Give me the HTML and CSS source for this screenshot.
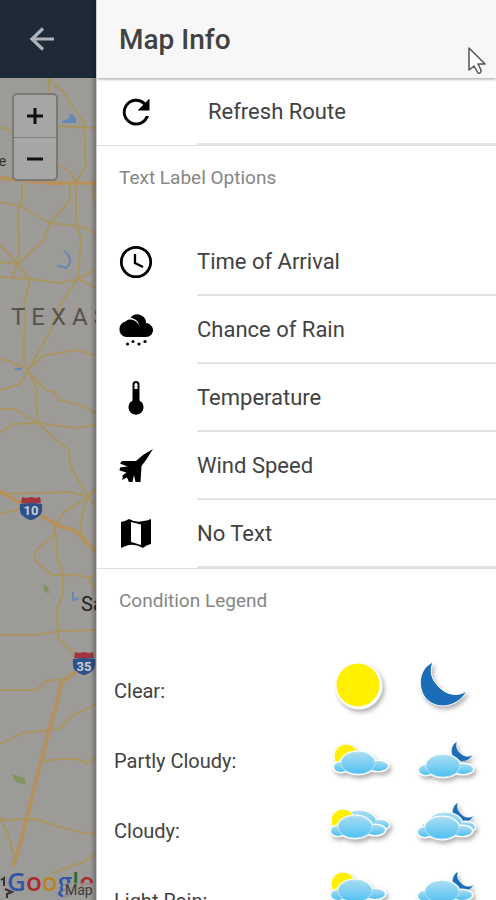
FILE: index.html
```html
<!DOCTYPE html>
<html lang="en">
<head>
<meta charset="utf-8">
<meta name="viewport" content="width=device-width, initial-scale=1">
<title>Map Info</title>
<link rel="stylesheet" href="styles.css">
</head>
<body>
<div class="app">
  <section class="map-side" aria-label="Map">
    <header class="map-bar">
      <button class="back" type="button" aria-label="Back">
        <svg width="26" height="24" viewBox="0 0 26 24"><path d="M25 12H3M14 1.500L3 12l11 10.500" fill="none" stroke="#b0b4b8" stroke-width="3.200"/></svg>
      </button>
    </header>
    <div class="map">
      <svg class="tiles" viewBox="0 78 96 822" preserveAspectRatio="xMinYMin slice">
        <g class="road">
          <path d="M49 78l3 5 12 9 8 14 12 16 1 28 1 16-10 16"/>
          <path d="M49 78l-1 16M0 127l13 5M57 126l39 2M57 164l13 8 6 10"/>
          <path d="M22 184v17l-4 11 1 38-1 14M0 202l20 4 30 17 34 4 12 7M70 184v16l-20 23-7 18-25 23-6 13"/>
          <path d="M76 184v38l5 18-3 38-18 27-10 27-22 38M93 182v14l3 7"/>
          <path d="M0 245l18 19 12 16-5 20-1 65M0 262l18 2M0 277l30 2 30 4 18-4 18-10M78 279l18 8"/>
          <path d="M0 358l28 11 17-14 33-5 18 6M28 371l-8 13-20 6M28 371l9 18-1 16 3 18M28 371l17 18 9 3 5 8 21 5 16 8"/>
          <path d="M0 409h14l24 14 37 5 21-3M0 433l12-9 26-1 18 17 13 10 1 15 8 15 10 16 8 10"/>
          <path d="M0 494l70-2 18 5 8-8M88 497l-5 15-3 15 4 12M88 497l-23 14-10 15-1 9-18 15-1 10 15 14 12 2 13-2 13 4 8 12M0 514l20-5"/>
          <path d="M54 528l3 12v18l6 14v23l-6 13 1 30 17 17M0 635h35l25-4 36-1M88 578l8-3"/>
          <path d="M0 690h36l10-9 16-2M0 743h4l18-10 28-3 10-2 15-15 9-2 12-7M43 761l17-2h15l12 4 9-5M0 820l35-1 25 8 24 6 12 1M0 817l8 17 7 24M52 873l31-11 13-8"/>
        </g>
        <path class="highway" d="M0 178l50 5h46M0 491l45 27 15 8 15 5 21 21M82 667l-20 15-6 23-8 30-8 30-10 40-10 40-7 21"/>
        <g class="water">
          <path d="M62 121l6-2 2-5 4 1 2 4v4H62z"/>
          <path d="M64 251q5 3 6 9 0 7-5 8-2-2-8-2M15 369h7M73 592v8l6-2" fill="none" stroke="#6688b5" stroke-width="2"/>
        </g>
        <path class="park" d="M11 774l13 4 2 6-9-1zM43 584l5 3 1 7-5-3z"/>
        <text class="state" x="11" y="325">TEXAS</text>
        <text class="city" x="81" y="611">San</text>
        <text class="town" x="-9" y="166">ne</text>
        <g id="shield">
          <path d="M20 504q4-1 11-1t11 1q1 10-3 12-5 4-8 4t-8-4q-4-2-3-12z" fill="#2d5289"/>
          <path d="M21 503l1-6 4 1 5-1 5 1 4-1 1 6z" fill="#a1343c"/>
        </g>
        <use href="#shield" x="53" y="155"/>
        <text class="route" x="31" y="515">10</text>
        <text class="route" x="84" y="671">35</text>
        <text class="google" x="7" y="891"><tspan fill="#3158a6">G</tspan><tspan fill="#a92d2e">o</tspan><tspan fill="#bb861d">o</tspan><tspan fill="#3158a6">g</tspan><tspan fill="#27723b">l</tspan><tspan fill="#a92d2e">e</tspan></text>
        <path d="M1 880l3-2v8M5 889l7 3-5 2v4" fill="none" stroke="#333" stroke-width="2"/>
        <path class="terms-plate" d="M63 883h33v17H63z"/>
        <text class="terms" x="65" y="895">Map</text>
      </svg>
      <div class="zoomer">
        <button type="button" aria-label="Zoom in"><svg width="18" height="18" viewBox="0 0 18 18"><path d="M9 1v16M1 9h16"/></svg></button>
        <button type="button" aria-label="Zoom out"><svg width="18" height="18" viewBox="0 0 18 18"><path d="M1 9h16"/></svg></button>
      </div>
    </div>
  </section>

  <aside class="panel">
    <header class="panel-bar">
      <h1>Map Info</h1>
      <svg class="pointer" width="20" height="29" viewBox="0 0 20 29"><path d="M2 2v22l5-4 4 7q3 1 3-3l-3-6h7z" fill="#fff" stroke="#55555a" stroke-width="1.500" stroke-linejoin="round"/></svg>
    </header>

    <ul class="list">
      <li class="row refresh"><button type="button">
        <svg class="icon" viewBox="0 0 36 36"><path d="M27.500 8.500A13.400 13.400 0 1 0 31 22h-3.300A10.400 10.400 0 1 1 25.300 10.700L19.500 16.500H31.500V4.500z"/></svg>
        <span>Refresh Route</span></button></li>
    </ul>

    <h2>Text Label Options</h2>
    <ul class="list options">
      <li class="row"><button type="button">
        <svg class="icon" viewBox="0 0 36 36"><circle cx="18" cy="18" r="14.700" fill="none" stroke="#000" stroke-width="2.800"/><path d="M17 10v9l8 4" fill="none" stroke="#000" stroke-width="2.300"/></svg>
        <span>Time of Arrival</span></button></li>
      <li class="row"><button type="button">
        <svg class="icon" viewBox="0 0 36 36"><path d="M8 25a7 7 0 0 1-6.500-7.500C1.500 13 4 10.500 7.500 9.500 10 6.500 15 7 18 9.500c2 1.500 2.500 3 3.500 5C21 9.500 17 6.500 12.500 5.700 15 2.500 19 1.500 22.500 3c4 1.500 5.500 4.500 5.500 8 4 .5 7 3.500 7 7 0 4-3 7-7 7z"/><circle cx="9.500" cy="32" r="1.600"/><circle cx="15" cy="29.500" r="1.600"/><circle cx="21" cy="32" r="1.600"/><circle cx="27" cy="29.500" r="1.600"/></svg>
        <span>Chance of Rain</span></button></li>
      <li class="row"><button type="button">
        <svg class="icon" viewBox="0 0 36 36"><path fill-rule="evenodd" d="M14.500 4.500a3.500 3.500 0 0 1 7 0v16a7.500 7.500 0 1 1-7 0zM16.500 4.500V9h3V4.500a1.500 1.500 0 0 0-3 0z"/></svg>
        <span>Temperature</span></button></li>
      <li class="row"><button type="button">
        <svg class="icon" viewBox="0 0 36 36"><path d="M35 1L25 7 18 13H4L2 15.500l7.500 3L2 19.500 1.500 22.500 8.500 24.500 4 28l1 1-1 3 5-2.500 2 4.500H14.500L16 27l1.500 7H22.500L23.500 18 28 12z"/></svg>
        <span>Wind Speed</span></button></li>
      <li class="row"><button type="button">
        <svg class="icon" viewBox="0 0 36 36"><path fill-rule="evenodd" d="M3 6q5-1 8-3 7 4 14 2 4 0 8-2v25q-5 1-8 4-7-4-14-3-4 1-8 3zM13 6v20l10 3V8.500z"/></svg>
        <span>No Text</span></button></li>
    </ul>

    <h2 id="legend-title">Condition Legend</h2>
    <table class="legend" aria-labelledby="legend-title">
      <tbody>
        <tr>
          <th scope="row">Clear:</th>
          <td><svg viewBox="0 0 64 64"><circle cx="31" cy="27" r="23.500" fill="#fff" class="lift"/><circle cx="30" cy="26" r="21.500" fill="#fff000"/></svg></td>
          <td><svg viewBox="0 0 64 64"><use href="#moon" class="lift"/></svg></td>
        </tr>
        <tr>
          <th scope="row">Partly Cloudy:</th>
          <td><svg viewBox="0 0 64 64"><g class="lift"><circle cx="18" cy="27" r="12" fill="#fff000" stroke="#fff"/><use href="#cloud" x="30" y="34"/></g></svg></td>
          <td><svg viewBox="0 0 64 64"><g class="lift"><use href="#moon" transform="translate(34 11) scale(.46)"/><use href="#cloud" x="28" y="37"/></g></svg></td>
        </tr>
        <tr>
          <th scope="row">Cloudy:</th>
          <td><svg viewBox="0 0 64 64"><g class="lift"><use href="#cloud" x="31" y="23"/><circle cx="15" cy="22" r="12" fill="#fff000" stroke="#fff"/><use href="#cloud" x="27" y="28"/></g></svg></td>
          <td><svg viewBox="0 0 64 64"><g class="lift"><use href="#moon" transform="translate(35 2) scale(.46)"/><use href="#cloud" x="30" y="25"/><use href="#cloud" x="27" y="29"/></g></svg></td>
        </tr>
        <tr>
          <th scope="row">Light Rain:</th>
          <td><svg viewBox="0 0 64 64"><g class="lift"><circle cx="15" cy="15" r="12" fill="#fff000" stroke="#fff"/><use href="#cloud" x="27" y="22"/></g></svg></td>
          <td><svg viewBox="0 0 64 64"><g class="lift"><use href="#moon" transform="translate(35 1) scale(.46)"/><use href="#cloud" x="27" y="23"/></g></svg></td>
        </tr>
      </tbody>
    </table>
  </aside>
</div>

<svg class="defs" width="0" height="0" aria-hidden="true">
  <defs>
    <linearGradient id="sky" x1="0" y1="0" x2="0" y2="1"><stop offset="0" stop-color="#a9ddf2"/><stop offset="1" stop-color="#4fc0f2"/></linearGradient>
    <path id="moon" d="M18 3C5 9 2 25 9 37c9 14 32 14 43-5C42 38 32 36 24 28 17 21 14 13 18 3z" fill="#1b6db8" stroke="#fff"/>
    <g id="cloud">
      <g fill="#fff" stroke="#fff" stroke-width="3"><ellipse rx="17" ry="11"/><ellipse cx="-17" cy="4" rx="7" ry="5"/><ellipse cx="20" cy="3" rx="10" ry="5"/></g>
      <g fill="url(#sky)"><ellipse cx="-17" cy="4" rx="7" ry="5"/><ellipse cx="20" cy="3" rx="10" ry="5"/><ellipse rx="17" ry="11" stroke="#b5e3f7"/></g>
    </g>
  </defs>
</svg>
</body>
</html>
```
FILE: styles.css
```css
* {
  box-sizing: border-box;
}

body {
  margin: 0;
  font-family: Roboto, "Liberation Sans", sans-serif;
  color: #424242;
  background: #fff;
}

button {
  border: 0;
  padding: 0;
  background: none;
  font: inherit;
  color: inherit;
}

.app {
  display: grid;
  grid-template-columns: 96px 1fr;
  height: 100vh;
  overflow: hidden;
}

/* Dimmed map behind the drawer */
.map-side {
  display: flex;
  flex-direction: column;
  min-height: 0;
  position: relative;
}

.map-side::after {
  content: "";
  position: absolute;
  inset: 0 0 0 auto;
  width: 6px;
  background: linear-gradient(to right, transparent, rgba(0, 0, 0, 0.25));
  pointer-events: none;
}

.map-bar {
  flex: none;
  height: 78px;
  padding-left: 29px;
  display: flex;
  align-items: center;
  background: #1e2a38;
}

.back svg {
  display: block;
}

.map {
  flex: 1;
  min-height: 0;
  position: relative;
  padding: 15px 12px;
  background: #9d9b98;
}

.tiles {
  position: absolute;
  inset: 0;
  width: 100%;
  height: 100%;
}

.road {
  fill: none;
  stroke: #a99560;
  stroke-width: 2;
  stroke-linejoin: round;
}

.highway {
  fill: none;
  stroke: #b5915f;
  stroke-width: 4;
  stroke-linejoin: round;
}

.water {
  fill: #6688b5;
}

.park {
  fill: #7e965d;
}

.state {
  font-size: 24px;
  letter-spacing: 6px;
  fill: #56524c;
}

.city {
  font-size: 20px;
  fill: #222;
}

.town {
  font-size: 14px;
  fill: #333;
}

.route {
  font-size: 13px;
  font-weight: 700;
  text-anchor: middle;
  fill: #c9ced6;
}

.google {
  font-family: "Open Sans", sans-serif;
  font-size: 26px;
  font-weight: 600;
}

.terms-plate {
  fill: #9d9b98;
  fill-opacity: 0.8;
}

.terms {
  font-size: 14px;
  fill: #3c3c3c;
}

.zoomer {
  position: relative;
  display: flex;
  flex-direction: column;
  width: 46px;
  border: 2px solid #7a7977;
  border-radius: 5px;
  background: #a6a6a5;
}

.zoomer button {
  display: grid;
  place-items: center;
  height: 42px;
}

.zoomer button + button {
  border-top: 1px solid #7f7f7e;
}

.zoomer path {
  stroke: #111;
  stroke-width: 3;
}

/* Drawer */
.panel {
  min-width: 0;
  overflow: hidden;
  border-left: 1px solid #ccc;
}

.panel-bar {
  position: relative;
  height: 78px;
  padding-left: 22px;
  display: flex;
  align-items: center;
  background: #f7f7f7;
  box-shadow: 0 1px 3px rgba(0, 0, 0, 0.4);
}

h1 {
  margin: 0;
  font-size: 28px;
  font-weight: 500;
}

.pointer {
  position: absolute;
  right: 9px;
  top: 46px;
}

.list {
  list-style: none;
  margin: 0;
  padding: 0;
  border-bottom: 1px solid #dedede;
}

.row button {
  display: flex;
  align-items: center;
  width: 100%;
  height: 68px;
  padding-left: 21px;
  text-align: left;
  font-size: 22px;
}

.row span {
  flex: 1;
  height: 68px;
  margin-left: 43px;
  line-height: 68px;
  border-bottom: 2px solid #e4e4e4;
}

.row.refresh button,
.row.refresh span {
  height: 67px;
}

.row.refresh span {
  padding-left: 11px;
}

.icon {
  width: 36px;
  height: 36px;
  fill: #000;
}

h2 {
  margin: 0;
  padding-left: 22px;
  height: 64px;
  line-height: 64px;
  font-size: 19px;
  font-weight: 400;
  color: #858585;
}

.options {
  padding-top: 18px;
}

.legend {
  width: 100%;
  margin-top: 23px;
  border-collapse: collapse;
  table-layout: fixed;
}

.legend tr {
  height: 70px;
}

.legend th {
  padding: 0 0 0 17px;
  text-align: left;
  font-size: 20px;
  font-weight: 400;
}

.legend td {
  width: 87px;
  padding: 0;
}

.legend td:last-child {
  width: 81px;
}

.legend svg {
  display: block;
  width: 64px;
  height: 64px;
  overflow: visible;
}

.lift {
  filter: drop-shadow(2px 3px 2px rgba(0, 0, 0, 0.3));
}

.defs {
  position: absolute;
}
```
